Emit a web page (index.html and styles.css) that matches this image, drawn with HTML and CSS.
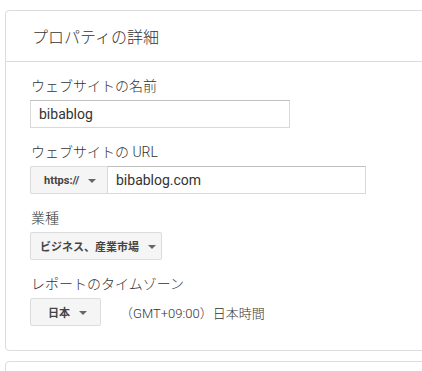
FILE: index.html
```html
<!DOCTYPE html>
<html lang="ja">
<head>
<meta charset="utf-8">
<link rel="stylesheet" href="styles.css">
</head>
<body>
<div class="page">
  <section class="card">
    <div class="card-header">プロパティの詳細</div>
    <div class="card-body">
      <div class="field">
        <div class="label">ウェブサイトの名前</div>
        <div class="input input-name">bibablog</div>
      </div>
      <div class="field">
        <div class="label">ウェブサイトの URL</div>
        <div class="row">
          <div class="btn btn-proto">https://<span class="caret"></span></div>
          <div class="input input-url">bibablog.com</div>
        </div>
      </div>
      <div class="field">
        <div class="label">業種</div>
        <div class="row">
          <div class="btn btn-industry">ビジネス、産業市場<span class="caret"></span></div>
        </div>
      </div>
      <div class="field">
        <div class="label">レポートのタイムゾーン</div>
        <div class="row">
          <div class="btn btn-country">日本<span class="caret"></span></div>
          <div class="tz">（GMT+09:00）日本時間</div>
        </div>
      </div>
    </div>
  </section>
  <section class="card card-next"></section>
</div>
</body>
</html>
```
FILE: styles.css
```css
* { box-sizing: border-box; }
html, body {
  margin: 0;
  padding: 0;
  background: #fff;
  overflow: hidden;
}
body {
  font-family: Roboto, "Noto Sans CJK JP", sans-serif;
  color: #333;
}
.page {
  padding: 10px 0 0 5px;
  width: 422px;
  height: 371px;
  overflow: hidden;
}
.card {
  border: 1px solid #dcdcdc;
  border-radius: 4px;
  width: 450px;
}
.card-next {
  margin-top: 10px;
  height: 40px;
}
.card-header {
  height: 51px;
  border-bottom: 1px solid #dcdcdc;
  padding-left: 26px;
  display: flex;
  align-items: center;
  font-size: 16px;
  font-weight: 300;
  color: #333;
  padding-bottom: 1px;
}
.card-body {
  padding: 14px 24px 24px 24px;
  display: flex;
  flex-direction: column;
  gap: 14px;
}
.label {
  font-size: 14px;
  font-weight: 300;
  line-height: 20px;
  margin-bottom: 4px;
  color: #333;
  padding-left: 1px;
}
.row {
  display: flex;
  align-items: center;
}
.input {
  height: 28px;
  border: 1px solid #d9d9d9;
  border-top-color: #c0c0c0;
  padding: 0 8px;
  font-size: 14px;
  line-height: 26px;
  color: #333;
  background: #fff;
}
.input-name { width: 260px; }
.input-url { width: 259px; }
.btn {
  height: 28px;
  border: 1px solid #dcdcdc;
  border-radius: 2px;
  background: #f5f5f5;
  color: #444;
  font-size: 11px;
  font-weight: bold;
  display: flex;
  align-items: center;
  white-space: nowrap;
}
.btn-proto {
  width: 77px;
  padding-left: 13px;
  border-radius: 2px 0 0 2px;
  border-right: none;
}
.btn-industry {
  width: 132px;
  padding-left: 9px;
}
.btn-country {
  width: 71px;
  padding-left: 17px;
}
.caret {
  width: 0;
  height: 0;
  border-left: 4px solid transparent;
  border-right: 4px solid transparent;
  border-top: 4px solid #666;
  margin-left: 9px;
  margin-top: 1px;
}
.tz {
  margin-left: 19px;
  font-size: 13px;
  font-weight: 300;
  color: #333;
}
```
